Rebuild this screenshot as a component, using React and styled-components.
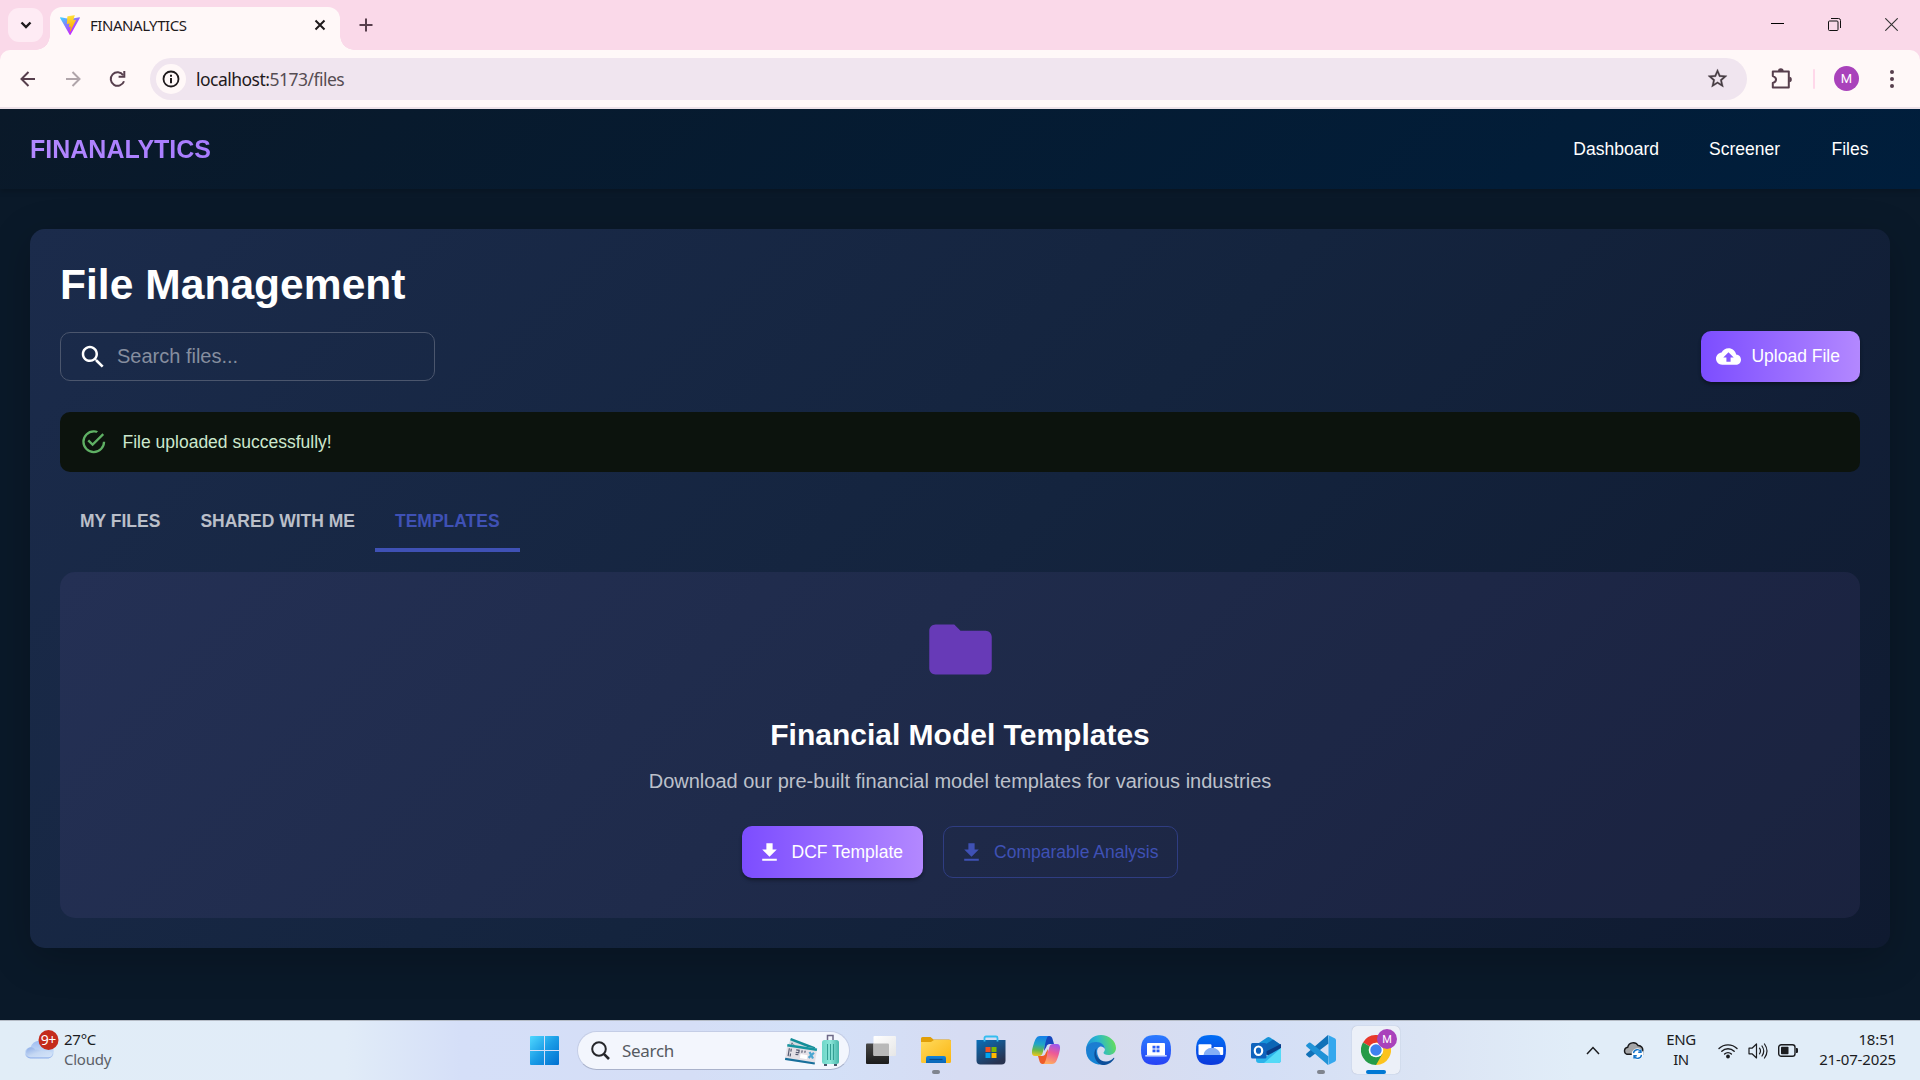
import React from "react";
import styled, { createGlobalStyle } from "styled-components";

const GlobalStyle = createGlobalStyle`
  * { box-sizing: border-box; }
  html, body { margin: 0; padding: 0; }
  body { overflow: hidden; background: #0a1929; }
  svg { display: block; flex: none; }
`;

const SYSTEM = `"Noto Sans", "Open Sans", sans-serif`;
const APP = `"Liberation Sans", Arial, sans-serif`;

const Screen = styled.div`
  width: 1920px;
  height: 1080px;
  display: flex;
  flex-direction: column;
  overflow: hidden;
`;

/* ---------- browser ---------- */

const TabStrip = styled.div`
  height: 50px;
  flex: none;
  display: flex;
  align-items: flex-start;
  background: #fad9e9;
  padding-left: 8px;
`;

const TabSearch = styled.div`
  width: 35px;
  height: 34px;
  margin-top: 8px;
  border-radius: 11px;
  background: #feebf4;
  display: grid;
  place-items: center;
`;

const Tab = styled.div`
  position: relative;
  width: 290px;
  height: 43px;
  margin: 7px 0 0 7px;
  padding: 0 12px 7px 10px;
  border-radius: 12px 12px 0 0;
  background: #fff8f8;
  display: flex;
  align-items: center;
  &::before, &::after {
    content: "";
    position: absolute;
    bottom: 0;
    width: 14px;
    height: 14px;
  }
  &::before {
    left: -14px;
    background: radial-gradient(circle at 0 0, transparent 13.5px, #fff8f8 14px);
  }
  &::after {
    right: -14px;
    background: radial-gradient(circle at 100% 0, transparent 13.5px, #fff8f8 14px);
  }
`;

const TabTitle = styled.div`
  flex: 1;
  margin-left: 10px;
  font: 400 15px/20px ${SYSTEM};
  letter-spacing: -0.45px;
  color: #1f1a1c;
`;

const NewTab = styled.div`
  width: 34px;
  height: 34px;
  margin: 8px 0 0 9px;
  display: grid;
  place-items: center;
`;

const WindowControls = styled.div`
  margin-left: auto;
  display: flex;
`;

const WindowButton = styled.div`
  width: 57px;
  height: 48px;
  display: grid;
  place-items: center;
`;

const ToolbarBack = styled.div`
  height: 59px;
  flex: none;
  background: #fad9e9;
`;

const Toolbar = styled.div`
  height: 59px;
  border-radius: 10px 10px 0 0;
  border-bottom: 2px solid #ece1e8;
  background: #fff8f8;
  display: flex;
  align-items: center;
  padding: 0 6px 0 5px;
`;

const ToolButton = styled.div`
  width: 45px;
  height: 45px;
  display: grid;
  place-items: center;
`;

const Omnibox = styled.div`
  flex: 1;
  height: 42px;
  margin: 0 12px 0 10px;
  border-radius: 21px;
  background: #f0e5ef;
  display: flex;
  align-items: center;
  padding: 0 18px 0 6px;
`;

const SiteInfo = styled.div`
  width: 30px;
  height: 30px;
  border-radius: 50%;
  background: #fff8f8;
  display: grid;
  place-items: center;
`;

const Url = styled.div`
  flex: 1;
  margin-left: 10px;
  font: 400 17.5px/24px ${SYSTEM};
  letter-spacing: -0.52px;
  color: #1f1a1c;
  span { color: #564d53; }
`;

const ToolDivider = styled.div`
  width: 2px;
  height: 20px;
  margin: 0 9px 0 9px;
  border-radius: 1px;
  background: #ffd8ea;
`;

const Avatar = styled.div`
  width: ${(p) => p.$size}px;
  height: ${(p) => p.$size}px;
  border-radius: 50%;
  background: #a942bb;
  color: #fff;
  font: 400 ${(p) => p.$font}px/1 Roboto, sans-serif;
  display: grid;
  place-items: center;
`;

/* ---------- application ---------- */

const Page = styled.div`
  height: 911px;
  flex: none;
  background: #0a1929;
  font-family: ${APP};
  color: #fff;
  overflow: hidden;
`;

const NavBar = styled.header`
  height: 80px;
  padding: 0 30px;
  display: flex;
  align-items: center;
  justify-content: space-between;
  background: linear-gradient(135deg, #0a1929 0%, #001e3c 100%);
  box-shadow: 0 2px 6px rgba(0, 0, 0, 0.2);
`;

const Brand = styled.div`
  font-size: 25px;
  font-weight: 700;
  background: linear-gradient(45deg, #b388ff, #a77bff);
  background-clip: text;
  -webkit-background-clip: text;
  color: transparent;
`;

const NavLinks = styled.nav`
  display: flex;
  gap: 10px;
`;

const NavLink = styled.a`
  min-width: 80px;
  padding: 7px 20px;
  text-align: center;
  font-size: 17.5px;
  line-height: 30px;
`;

const Card = styled.main`
  margin: 40px 30px 0;
  height: 719px;
  padding: 30px;
  border-radius: 15px;
  background: linear-gradient(135deg, #1b2b4b 0%, #14243e 50%, #0f1a30 100%);
  box-shadow: 0 10px 40px rgba(0, 0, 0, 0.22);
  display: flex;
  flex-direction: column;
`;

const Title = styled.h1`
  margin: 0;
  font-size: 42.5px;
  line-height: 51px;
  letter-spacing: 0.05px;
  font-weight: 700;
`;

const Actions = styled.div`
  margin-top: 21px;
  height: 51px;
  display: flex;
  justify-content: space-between;
  align-items: center;
`;

const SearchField = styled.div`
  width: 375px;
  height: 49px;
  padding-left: 17px;
  border: 1px solid #4b566d;
  border-radius: 10px;
  display: flex;
  align-items: center;
  gap: 9px;
  font-size: 20px;
  color: #868e9f;
  svg { color: #fff; }
`;

const Button = styled.button`
  height: ${(p) => p.$height}px;
  padding: 0 ${(p) => (p.$outlined ? 19 : 20)}px 0 ${(p) => (p.$outlined ? 15 : 15)}px;
  border: ${(p) => (p.$outlined ? "1px solid #2f3d82" : "none")};
  border-radius: 10px;
  background: ${(p) => (p.$outlined ? "transparent" : "linear-gradient(to right, #7c4dff 0%, #b388ff 100%)")};
  box-shadow: ${(p) => (p.$outlined ? "none" : "0 3px 4px -1px rgba(0,0,0,.25), 0 2px 3px rgba(0,0,0,.2)")};
  color: ${(p) => (p.$outlined ? "#3f51b5" : "#fff")};
  font-family: ${APP};
  font-size: 17.5px;
  display: flex;
  align-items: center;
  gap: 10px;
  white-space: nowrap;
`;

const Alert = styled.div`
  margin-top: 30px;
  height: 60px;
  flex: none;
  padding-left: 20px;
  border-radius: 10px;
  background: #0c130d;
  color: #cce8cd;
  font-size: 17.5px;
  display: flex;
  align-items: center;
  gap: 15px;
  svg { color: #5fb064; }
`;

const Tabs = styled.div`
  margin-top: 20px;
  height: 60px;
  flex: none;
  display: flex;
`;

const TabItem = styled.div`
  padding: 0 20px;
  font-size: 17.5px;
  font-weight: 700;
  line-height: 58px;
  color: ${(p) => (p.$active ? "#3f51b5" : "#babfc9")};
  border-bottom: 4px solid ${(p) => (p.$active ? "#3f51b5" : "transparent")};
`;

const Panel = styled.section`
  margin-top: 20px;
  height: 346px;
  padding-top: 40px;
  border-radius: 15px;
  background: rgba(179, 136, 255, 0.072);
  display: flex;
  flex-direction: column;
  align-items: center;
`;

const PanelTitle = styled.h2`
  margin: 28px 0 0;
  font-size: 30px;
  line-height: 40px;
  font-weight: 700;
`;

const PanelText = styled.p`
  margin: 11px 0 0;
  font-size: 20px;
  line-height: 30px;
  color: #bcc0ca;
`;

const PanelActions = styled.div`
  margin-top: 30px;
  display: flex;
  gap: 20px;
`;

/* ---------- taskbar ---------- */

const Taskbar = styled.footer`
  height: 60px;
  flex: none;
  border-top: 1px solid #b5bcc6;
  background: linear-gradient(90deg, #e1edf7 0%, #e1ecf8 18%, #d5dff8 24%, #d5def6 36%, #d3e1f8 42%, #d6dcf3 50%, #d8dcef 58%, #d4dff6 66%, #dbe4f4 74%, #e1edf8 82%, #e1edf8 100%);
  font-family: ${SYSTEM};
  color: #1b1c1f;
  display: flex;
  align-items: center;
`;

const Weather = styled.div`
  width: 527px;
  padding: 0 0 4px 23px;
  display: flex;
  align-items: center;
  gap: 4px;
`;

const WeatherText = styled.div`
  font-size: 15px;
  line-height: 20px;
  letter-spacing: -0.25px;
  div + div { color: #5b6067; }
`;

const StartCell = styled.div`
  width: 34px;
  display: grid;
  place-items: center;
`;

const SearchPill = styled.div`
  width: 273px;
  height: 39px;
  margin: 0 3px 1px 16px;
  padding: 0 10px 0 13px;
  border: 1px solid #c4cde6;
  border-bottom-color: #a9b2cb;
  border-radius: 20px;
  background: #f3f6fd;
  display: flex;
  align-items: center;
  gap: 12px;
  font-size: 17px;
  letter-spacing: -0.3px;
  color: #565a61;
  svg:last-child { margin-left: auto; }
`;

const AppCell = styled.div`
  position: relative;
  width: 55px;
  height: 59px;
  padding-bottom: 1px;
  display: grid;
  place-items: center;
`;

const ActiveTile = styled.div`
  width: 48px;
  height: 48px;
  border-radius: 5px;
  background: #ecf0f8;
  box-shadow: 0 0 1px rgba(90, 100, 130, 0.5);
  display: grid;
  place-items: center;
`;

const RunMark = styled.div`
  position: absolute;
  left: 50%;
  bottom: 6px;
  width: ${(p) => (p.$active ? 20 : 8)}px;
  height: 4px;
  transform: translateX(-50%);
  border-radius: 2px;
  background: ${(p) => (p.$active ? "#0078d4" : "#7f848e")};
`;

const ProfileBadge = styled.div`
  position: absolute;
  left: 29px;
  top: 8px;
`;

const Tray = styled.div`
  margin-left: auto;
  padding-right: 24px;
  display: flex;
  align-items: center;
`;

const TrayItem = styled.div`
  width: ${(p) => p.$width}px;
  display: grid;
  place-items: center;
`;

const TrayText = styled.div`
  width: ${(p) => p.$width}px;
  padding-bottom: 4px;
  text-align: ${(p) => p.$align};
  font-size: 15px;
  line-height: 20px;
  letter-spacing: ${(p) => p.$spacing}px;
  white-space: nowrap;
`;

/* ---------- icons ---------- */

const Solid = ({ size, d }) => (
  <svg width={size} height={size} viewBox="0 0 24 24" fill="currentColor"><path d={d} /></svg>
);
const Line = ({ w, h = w, d, stroke = "#573f4d", sw = 2, ...rest }) => (
  <svg width={w} height={h} viewBox={`0 0 ${w} ${h}`} fill="none" stroke={stroke} strokeWidth={sw} {...rest}><path d={d} /></svg>
);

const SEARCH = "M15.5 14h-.79l-.28-.27C15.41 12.59 16 11.11 16 9.5 16 5.91 13.09 3 9.5 3S3 5.91 3 9.5 5.91 16 9.5 16c1.61 0 3.09-.59 4.23-1.57l.27.28v.79l5 4.99L20.49 19l-4.99-5zm-6 0C7.01 14 5 11.99 5 9.5S7.01 5 9.5 5 14 7.01 14 9.5 11.99 14 9.5 14z";
const CLOUD_UP = "M19.35 10.04C18.67 6.59 15.64 4 12 4 9.11 4 6.6 5.64 5.35 8.04 2.34 8.36 0 10.91 0 14c0 3.31 2.69 6 6 6h13c2.76 0 5-2.24 5-5 0-2.64-2.05-4.78-4.65-4.96zM14 13v4h-4v-4H7l5-5 5 5h-3z";
const SUCCESS = "M20,12A8,8 0 0,1 12,20A8,8 0 0,1 4,12A8,8 0 0,1 12,4C12.76,4 13.5,4.11 14.2,4.31L15.77,2.74C14.61,2.26 13.34,2 12,2A10,10 0 0,0 2,12A10,10 0 0,0 12,22A10,10 0 0,0 22,12H20M7.91,10.08L6.5,11.5L11,16L21,6L19.59,4.58L11,13.17L7.91,10.08Z";
const FOLDER = "M10 4H4c-1.1 0-1.99.9-1.99 2L2 18c0 1.1.9 2 2 2h16c1.1 0 2-.9 2-2V8c0-1.1-.9-2-2-2h-8l-2-2z";
const DOWNLOAD = "M5 20h14v-2H5v2zM19 9h-4V3H9v6H5l7 7 7-7z";

const ViteLogo = () => (
  <svg width="20" height="20" viewBox="0 0 256 257">
    <defs>
      <linearGradient id="vA" x1="-.8%" x2="57.6%" y1="7.6%" y2="78.4%"><stop offset="0" stopColor="#41d1ff" /><stop offset="1" stopColor="#bd34fe" /></linearGradient>
      <linearGradient id="vB" x1="43.4%" x2="50.3%" y1="2.2%" y2="89%"><stop offset="0" stopColor="#ffea83" /><stop offset=".083" stopColor="#ffdd35" /><stop offset="1" stopColor="#ffa800" /></linearGradient>
    </defs>
    <path fill="url(#vA)" d="M255.153 37.938L134.897 252.976c-2.483 4.44-8.862 4.466-11.382.048L.875 37.958c-2.746-4.814 1.371-10.646 6.827-9.67l120.385 21.517a6.537 6.537 0 0 0 2.322-.004l117.867-21.483c5.438-.991 9.574 4.796 6.877 9.62Z" />
    <path fill="url(#vB)" d="M185.432.063L96.44 17.501a3.268 3.268 0 0 0-2.634 3.014l-5.474 92.456a3.268 3.268 0 0 0 3.997 3.378l24.777-5.718c2.318-.535 4.413 1.507 3.936 3.838l-7.361 36.047c-.495 2.426 1.782 4.5 4.151 3.78l15.304-4.649c2.372-.72 4.652 1.36 4.15 3.788l-11.698 56.621c-.732 3.542 3.979 5.473 5.943 2.437l1.313-2.028l72.516-144.72c1.215-2.423-.88-5.186-3.54-4.672l-25.505 4.922c-2.396.462-4.435-1.77-3.759-4.114l16.646-57.705c.677-2.35-1.37-4.583-3.769-4.113Z" />
  </svg>
);

const Reload = () => (
  <svg width="18" height="18" viewBox="0 0 18 18" fill="none" stroke="#573f4d" strokeWidth="2">
    <path d="M15 11.200A6.800 6.800 0 1 1 14.200 5.200" /><path d="M15.300 1v5.700h-5.700" />
  </svg>
);

const Puzzle = () => (
  <svg width="21" height="21" viewBox="0 0 21 21">
    <path fill="none" stroke="#573f4d" strokeWidth="2" strokeLinejoin="round" d="M1.800 3.500h16v16h-16v-4.600c4.300-1.200 4.300-5.600 0-6.800Z" />
    <path fill="#573f4d" d="M7 3a2.800 2.700 0 0 1 5.600 0zM18.300 8.800a2.500 2.700 0 0 1 0 5.400z" />
  </svg>
);

const Cloud = () => (
  <svg width="37" height="37" viewBox="0 0 37 37">
    <defs>
      <linearGradient id="cl" x1="0" x2="0" y1="0" y2="1"><stop offset="0" stopColor="#9dbcf2" /><stop offset=".7" stopColor="#c8dcf6" /><stop offset="1" stopColor="#8eaeea" /></linearGradient>
      <linearGradient id="cl2" x1="0" x2="1" y1="0" y2="1"><stop offset="0" stopColor="#8babe6" /><stop offset=".5" stopColor="#c5d8f3" /><stop offset="1" stopColor="#d5e5fa" /></linearGradient>
    </defs>
    <path fill="url(#cl)" d="M7.500 28.500a5.600 5.600 0 0 1 0-11.200A10.200 10.200 0 0 1 25 14.500 7.200 7.200 0 0 1 25.500 28.500z" />
    <path fill="url(#cl2)" d="M7.500 27.300a5 5 0 1 1 4.800-7.600c3.500-1 6.500 2 10 1.500 3-.5 8 1 6.500 4.300-1 1.800-3 1.800-4 1.800z" />
    <circle cx="25.500" cy="10" r="10" fill="#c42b1c" />
    <text x="25.200" y="15" textAnchor="middle" fontSize="14" fontFamily="Noto Sans, sans-serif" fill="#fff" letterSpacing="-.5">9+</text>
  </svg>
);

const StartIcon = () => (
  <svg width="29" height="29" viewBox="0 0 29 29">
    <defs><linearGradient id="st" x1="0" y1="0" x2="29" y2="29" gradientUnits="userSpaceOnUse"><stop offset="0" stopColor="#50d8ff" /><stop offset=".5" stopColor="#1a9ce6" /><stop offset="1" stopColor="#006fd0" /></linearGradient></defs>
    <path fill="url(#st)" d="M1 0h13v14H0V1a1 1 0 0 1 1-1zM15 0h13a1 1 0 0 1 1 1v13H15zM0 15h14v14H1a1 1 0 0 1-1-1zM15 15h14v13a1 1 0 0 1-1 1H15z" />
  </svg>
);

const Travel = () => (
  <svg width="54" height="32" viewBox="0 0 54 32">
    <defs><linearGradient id="tv" x1="0" x2="1"><stop offset="0" stopColor="#6ed6c8" /><stop offset=".5" stopColor="#8be5d8" /><stop offset="1" stopColor="#48b6aa" /></linearGradient></defs>
    <g transform="rotate(21 6 4)">
      <rect x="6" y="4" width="26" height="12" fill="#d5dde3" />
      <rect x="6" y="4" width="26" height="2.500" fill="#138d98" />
      <path stroke="#555a70" strokeWidth="1.200" d="M9 8v5M11 9v4" />
    </g>
    <g transform="rotate(9 3 10)">
      <rect x="2.500" y="10" width="30" height="16" fill="#e4e0e6" />
      <rect x="2.500" y="10" width="30" height="2.500" fill="#1595a0" />
      <rect x="2.500" y="24" width="30" height="2.200" fill="#176f9b" />
      <path stroke="#555a70" fill="none" strokeWidth="1.200" d="M5 14v8M7 14v3m0 2v3M12 14.500h3v2.500h-3M12 19h3M18 14v2.500M21 14v2" />
      <rect x="17" y="18" width="7" height="4" fill="#fff" />
      <path stroke="#4ba6d1" strokeWidth="2.200" d="M25.500 14.500l4.500 6M30 14.500l-4.500 6" />
    </g>
    <path fill="none" stroke="#6e6987" strokeWidth="1.500" d="M42.500 7V1.500h5.500v5.500" />
    <rect x="37" y="6" width="17" height="24" rx="2.500" fill="url(#tv)" />
    <path stroke="#349e94" strokeWidth="1" d="M42.500 10v16M45.500 10v16M48.500 10v16" />
    <path stroke="#46566a" strokeWidth="2" d="M39 31h3M49 31h3" />
  </svg>
);

const TaskView = () => (
  <svg width="30" height="30" viewBox="0 0 30 30">
    <defs><linearGradient id="tk" x2="0" y2="1"><stop stopColor="#474747" /><stop offset="1" stopColor="#1b1b1b" /></linearGradient><linearGradient id="tw" x2="1" y2="1"><stop stopColor="#fff" /><stop offset="1" stopColor="#e6e6e6" /></linearGradient></defs>
    <rect x="0" y="8.500" width="23" height="20.500" rx="1" fill="url(#tk)" />
    <rect x="7.500" y="1" width="22.500" height="20" rx="1" fill="url(#tw)" />
    <path fill="#b9b9b9" d="M7.500 8.500H22a1 1 0 0 1 1 1V21H8.500a1 1 0 0 1-1-1z" />
  </svg>
);

const Explorer = () => (
  <svg width="30" height="30" viewBox="0 0 30 30">
    <defs><linearGradient id="ex" x1="0" y1="0" x2="1" y2="1"><stop stopColor="#ffda5d" /><stop offset="1" stopColor="#fbb510" /></linearGradient><linearGradient id="eb" x2="0" y2="1"><stop stopColor="#1383d9" /><stop offset="1" stopColor="#0b67b7" /></linearGradient></defs>
    <path fill="#e19f08" d="M0 3.500A1.500 1.500 0 0 1 1.500 2h8l3 2.500H28a2 2 0 0 1 2 2V12H0z" />
    <path fill="url(#ex)" d="M0 7h10l3-2h15.500A1.500 1.500 0 0 1 30 6.500v20a1.500 1.500 0 0 1-1.500 1.500h-27A1.500 1.500 0 0 1 0 26.500z" />
    <path fill="url(#eb)" d="M5 28v-5a2 2 0 0 1 2-2h16a2 2 0 0 1 2 2v5z" />
    <path stroke="#084a8a" strokeWidth="1.200" d="M8.500 24.500h13" />
  </svg>
);

const Store = () => (
  <svg width="30" height="30" viewBox="0 0 30 30">
    <defs><linearGradient id="so" x2="0.600" y2="1"><stop stopColor="#0a6fb9" /><stop offset="1" stopColor="#28324f" /></linearGradient></defs>
    <path fill="none" stroke="#35bdf0" strokeWidth="1.800" d="M8.500 7V3a1.500 1.500 0 0 1 1.500-1.500h10A1.500 1.500 0 0 1 21.500 3v4" />
    <path fill="url(#so)" d="M.5 5h29v20.500a4 4 0 0 1-4 4h-21a4 4 0 0 1-4-4z" />
    <path stroke="#35bdf0" strokeWidth="1.800" d="M8.500 5v1.500M21.500 5v1.500" />
    <path fill="#f25022" d="M9.500 12h5v5h-5z" /><path fill="#7fba00" d="M15.500 12h5v5h-5z" />
    <path fill="#00a4ef" d="M9.500 18h5v5h-5z" /><path fill="#ffb900" d="M15.500 18h5v5h-5z" />
  </svg>
);

const Copilot = () => (
  <svg width="30" height="30" viewBox="0 0 30 30">
    <defs>
      <linearGradient id="c1" x1=".3" y1="0" x2=".2" y2="1"><stop stopColor="#1680e8" /><stop offset=".4" stopColor="#20a5c6" /><stop offset=".7" stopColor="#66b84b" /><stop offset="1" stopColor="#f2c61c" /></linearGradient>
      <linearGradient id="c2" x1=".7" y1="0" x2=".4" y2="1"><stop stopColor="#9b57ee" /><stop offset=".45" stopColor="#ee5a95" /><stop offset="1" stopColor="#ffac5f" /></linearGradient>
    </defs>
    <path fill="#1547bd" d="M14 1h4.500c1.600 0 2.400 1 2.900 2.500L23 9h-4c-2 0-3 .7-3.700 3L13 16z" />
    <path fill="#ee5b28" d="M16 29h-4.500c-1.600 0-2.400-1-2.900-2.500L7 21h4c2 0 3-.7 3.700-3L17 14z" />
    <path fill="url(#c1)" d="M18 1H9C5.500 1 4.300 4 2.700 9S-.8 21 4 21h4c2 0 3-1 3.700-3.300l3.100-11.200C15.500 4 16.300 1 18 1z" />
    <path fill="url(#c2)" d="M12 29h9c3.500 0 4.700-3 6.300-8S30.800 9 26 9h-4c-2 0-3 1-3.700 3.300l-3.100 11.200C14.500 26 13.700 29 12 29z" />
  </svg>
);

const Edge = () => (
  <svg width="30" height="30" viewBox="0 0 30 30">
    <defs>
      <linearGradient id="e1" x1="0" y1=".6" x2="1" y2=".4"><stop stopColor="#1c8edb" /><stop offset=".45" stopColor="#2ab7cd" /><stop offset="1" stopColor="#67df55" /></linearGradient>
      <linearGradient id="e2" x2=".3" y2="1"><stop stopColor="#1e7bd0" /><stop offset="1" stopColor="#1485d5" /></linearGradient>
    </defs>
    <path fill="url(#e1)" d="M0 14.500C.5 6 7 0 15 0s15 6 15 13c0 4.500-3.500 7-7.500 7-3.500 0-5-1.300-5-2.300 0-.7 1.400-1.300 1.400-3.700C18.900 11 15.500 8 11 8 5 8 1 11 0 14.500z" />
    <path fill="url(#e2)" d="M0 15C0 10 4.500 7 10 7c5.500 0 9 3.500 9 7-1-1.800-2.500-2.600-4-2.600-4 0-5 6-2.500 10.500 2 4 6 6.600 9 6.400C13 32 0 28 0 15z" />
    <path fill="#0d4f9a" d="M10.500 13c-2.500 8 3 13.500 9.500 13.500 3 0 5.500-1.500 7.500-3.500.5-.5 1 0 .7.700C25.500 28 21 30 17 30 10 29.500 5.500 19 10.500 13z" />
  </svg>
);

const Squircle = ({ id, children, dark }) => (
  <svg width="30" height="30" viewBox="0 0 30 30">
    <defs><linearGradient id={id} x2="0" y2="1"><stop stopColor={dark ? "#006ef5" : "#2a7bff"} /><stop offset="1" stopColor={dark ? "#0b38dc" : "#2842f5"} /></linearGradient></defs>
    <path fill={`url(#${id})`} d="M15 0c11 0 15 4 15 15s-4 15-15 15S0 26 0 15 4 0 15 0z" />
    {children}
  </svg>
);

const Outlook = () => (
  <svg width="30" height="30" viewBox="0 0 30 30">
    <path fill="#1592d8" d="M5 10L16 2.500q1.500-1 3 0L30 10v5H5z" />
    <path fill="#0c65b5" d="M15 9l7-4.500L30 10 14 21z" />
    <path fill="#0a3c88" d="M14 17l16-8v5l-12 8z" />
    <path fill="#2cb3ea" d="M5 22l9 0 16-9v12a3 3 0 0 1-3 3H8a3 3 0 0 1-3-3z" />
    <path fill="#54daf7" d="M30 13v12a3 3 0 0 1-3 3H13z" />
    <rect x="0" y="8" width="15.500" height="15.500" rx="1.500" fill="#0f63bd" />
    <ellipse cx="7.500" cy="15.700" rx="3.700" ry="4.200" fill="none" stroke="#fff" strokeWidth="2.200" />
  </svg>
);

const Code = () => (
  <svg width="30" height="30" viewBox="0 0 30 30">
    <path fill="#1071b8" d="M22.500 8.500L4.500 22.300a1.200 1.200 0 0 1-1.600-.1L.5 20.300a1.200 1.200 0 0 1 0-1.700L22 0z" />
    <path fill="#1f92d7" d="M22.500 21.500L4.500 7.700a1.200 1.200 0 0 0-1.600.1L.5 9.700a1.200 1.200 0 0 0 0 1.700L22 30z" />
    <path fill="#35a8ee" d="M22 0l6.700 3.200a2.300 2.300 0 0 1 1.300 2v19.600a2.300 2.300 0 0 1-1.300 2L22 30c.4-.4.500-1 .5-1.500v-27C22.500 1 22.400.4 22 0z" />
  </svg>
);

const Chrome = () => (
  <svg width="30" height="30" viewBox="0 0 30 30">
    <path fill="#e8392b" d="M15 15L2 7.500a15 15 0 0 1 26 0z" />
    <path fill="#fcc31e" d="M15 15V7.500h13A15 15 0 0 1 15 30z" />
    <path fill="#259b48" d="M15 15l6.500 3.750L15 30A15 15 0 0 1 2 7.500z" />
    <circle cx="15" cy="15" r="7.300" fill="#fff" /><circle cx="15" cy="15" r="5.700" fill="#3f82f0" />
  </svg>
);

const SyncCloud = () => (
  <svg width="21" height="19" viewBox="0 0 21 19">
    <path fill="#a4a5a7" stroke="#18191b" strokeWidth="1.400" d="M4 13.300a3.600 3.600 0 0 1 .7-7A5.600 5.600 0 0 1 15 4.500a4.500 4.500 0 0 1 4.500 6v2.800z" />
    <circle cx="14.500" cy="13" r="5.800" fill="#fff" />
    <path fill="none" stroke="#1473c8" strokeWidth="1.400" d="M10.500 12.200a4 4 0 0 1 7.500-1.400M18 8.500v2.800h-2.800M18.500 13.800a4 4 0 0 1-7.500 1.400M11 17.500v-2.800h2.800" />
  </svg>
);

const Wifi = () => (
  <svg width="20" height="16" viewBox="0 0 20 16" fill="none" stroke="#1b1c1f" strokeWidth="1.400" strokeLinecap="round">
    <path d="M1 5.500a13 13 0 0 1 18 0M3.800 8.300a9 9 0 0 1 12.400 0M6.600 11a5 5 0 0 1 6.800 0" /><circle cx="10" cy="13.500" r="1.200" fill="#1b1c1f" />
  </svg>
);

const Speaker = () => (
  <svg width="20" height="18" viewBox="0 0 20 18" fill="none" stroke="#1b1c1f" strokeWidth="1.200" strokeLinecap="round" strokeLinejoin="round">
    <path d="M1 6.200h3L8.500 2v14L4 11.800H1zM11.500 6.200q2 2.800 0 5.600M14 4q3.500 5 0 10M16.500 2q5 7 0 14" />
  </svg>
);

const Battery = () => (
  <svg width="20" height="13" viewBox="0 0 20 13">
    <rect x=".7" y=".7" width="16.300" height="11.600" rx="2.600" fill="none" stroke="#1b1c1f" strokeWidth="1.400" />
    <rect x="3" y="2.800" width="7.500" height="7.400" rx=".8" fill="#1b1c1f" /><path fill="#1b1c1f" d="M18 4h.7a1.300 1.300 0 0 1 1.300 1.300v2.400A1.300 1.300 0 0 1 18.700 9H18z" />
  </svg>
);

/* ---------- page ---------- */

const taskbarApps = [
  { name: "taskview", icon: <TaskView /> },
  { name: "explorer", icon: <Explorer />, running: true },
  { name: "store", icon: <Store /> },
  { name: "copilot", icon: <Copilot /> },
  { name: "edge", icon: <Edge /> },
  {
    name: "laptop",
    icon: (
      <Squircle id="q1">
        <path fill="#fff" d="M7 8h16a1 1 0 0 1 1 1v11H6V9a1 1 0 0 1 1-1z" />
        <path fill="#c6d4ff" d="M4.300 20h21.400v1.600H4.300z" />
        <path fill="#2b5df8" d="M11.500 10.800h3v2.700h-3zM15.500 10.800h3v2.700h-3zM11.500 14.500h3v2.700h-3zM15.500 14.500h3v2.700h-3z" />
      </Squircle>
    ),
  },
  {
    name: "screens",
    icon: (
      <Squircle id="q2" dark>
        <rect x="2.500" y="9.300" width="13" height="10.700" rx="1" fill="#fff" />
        <rect x="17.500" y="12" width="9.700" height="8" rx="1" fill="#fff" />
        <path fill="#83aef6" d="M7.500 20a8.500 7.200 0 0 1 17 0z" />
        <path stroke="#0755e8" strokeWidth="1.300" d="M16.500 9v4" />
      </Squircle>
    ),
  },
  { name: "outlook", icon: <Outlook /> },
  { name: "code", icon: <Code />, running: true },
];

function BrowserFrame() {
  return (
    <>
      <TabStrip>
        <TabSearch><Line w={12} h={8} sw={2.4} stroke="#1f1a1c" d="M1.500 1.500L6 6l4.500-4.500" /></TabSearch>
        <Tab>
          <ViteLogo />
          <TabTitle>FINANALYTICS</TabTitle>
          <Line w={16} sw={2} stroke="#1f1a1c" d="M3.500 3.500l9 9M12.500 3.500l-9 9" />
        </Tab>
        <NewTab><Line w={14} sw={2} d="M7 .5v13M.5 7h13" /></NewTab>
        <WindowControls>
          <WindowButton><Line w={13} h={5} sw={1} stroke="#000" d="M0 1.500h13" /></WindowButton>
          <WindowButton><Line w={13} sw={1} stroke="#111" d="M.5 4a1 1 0 0 1 1-1H9a1 1 0 0 1 1 1v7.500a1 1 0 0 1-1 1H1.500a1 1 0 0 1-1-1zM3 .5h7.500a2 2 0 0 1 2 2V10" /></WindowButton>
          <WindowButton><Line w={13} sw={1.1} stroke="#333" d="M.3.3l12.400 12.400M12.700.3L.3 12.700" /></WindowButton>
        </WindowControls>
      </TabStrip>
      <ToolbarBack>
        <Toolbar>
          <ToolButton><Line w={16} d="M15 8H2M8.500 1L1.500 8l7 7" /></ToolButton>
          <ToolButton><Line w={16} stroke="#b0a5aa" d="M1 8h13M7.500 1l7 7-7 7" /></ToolButton>
          <ToolButton><Reload /></ToolButton>
          <Omnibox>
            <SiteInfo>
              <svg width="18" height="18" viewBox="0 0 18 18"><circle cx="9" cy="9" r="7.500" fill="none" stroke="#1f1a1c" strokeWidth="1.800" /><path fill="#1f1a1c" d="M8 4.800h2v2H8zM8 8h2v5.200H8z" /></svg>
            </SiteInfo>
            <Url>localhost:<span>5173/files</span></Url>
            <svg width="23" height="23" viewBox="0 0 24 24" fill="#463c42" stroke="#463c42" strokeWidth=".3"><path d="M22 9.240l-7.190-.62L12 2 9.190 8.630 2 9.240l5.460 4.730L5.820 21 12 17.270 18.180 21l-1.630-7.030L22 9.240zM12 15.400l-3.760 2.270 1-4.280-3.320-2.880 4.380-.38L12 6.100l1.710 4.040 4.380.38-3.320 2.880 1 4.280L12 15.400z" /></svg>
          </Omnibox>
          <ToolButton><Puzzle /></ToolButton>
          <ToolDivider />
          <ToolButton><Avatar $size={25} $font={13}>M</Avatar></ToolButton>
          <ToolButton><svg width="4" height="18" viewBox="0 0 4 18" fill="#573f4d"><circle cx="2" cy="2" r="2" /><circle cx="2" cy="9" r="2" /><circle cx="2" cy="16" r="2" /></svg></ToolButton>
        </Toolbar>
      </ToolbarBack>
    </>
  );
}

function FilesPage() {
  return (
    <Page>
      <NavBar>
        <Brand>FINANALYTICS</Brand>
        <NavLinks>
          <NavLink>Dashboard</NavLink>
          <NavLink>Screener</NavLink>
          <NavLink>Files</NavLink>
        </NavLinks>
      </NavBar>
      <Card>
        <Title>File Management</Title>
        <Actions>
          <SearchField><Solid size={30} d={SEARCH} />Search files...</SearchField>
          <Button $height={51}><Solid size={25} d={CLOUD_UP} />Upload File</Button>
        </Actions>
        <Alert><Solid size={27.5} d={SUCCESS} />File uploaded successfully!</Alert>
        <Tabs>
          <TabItem>MY FILES</TabItem>
          <TabItem>SHARED WITH ME</TabItem>
          <TabItem $active>TEMPLATES</TabItem>
        </Tabs>
        <Panel>
          <svg width="75" height="75" viewBox="0 0 24 24" fill="#673ab7"><path d={FOLDER} /></svg>
          <PanelTitle>Financial Model Templates</PanelTitle>
          <PanelText>Download our pre-built financial model templates for various industries</PanelText>
          <PanelActions>
            <Button $height={52}><Solid size={25} d={DOWNLOAD} />DCF Template</Button>
            <Button $height={52} $outlined><Solid size={25} d={DOWNLOAD} />Comparable Analysis</Button>
          </PanelActions>
        </Panel>
      </Card>
    </Page>
  );
}

function SystemTaskbar() {
  return (
    <Taskbar>
      <Weather>
        <Cloud />
        <WeatherText><div>27°C</div><div>Cloudy</div></WeatherText>
      </Weather>
      <StartCell><StartIcon /></StartCell>
      <SearchPill>
        <svg width="19" height="19" viewBox="0 0 19 19" fill="none" stroke="#25262a" strokeWidth="2"><circle cx="8" cy="8" r="6.800" /><path strokeWidth="2.600" d="M12.800 12.800l5.200 5.200" /></svg>
        Search
        <Travel />
      </SearchPill>
      {taskbarApps.map((a) => (
        <AppCell key={a.name}>{a.icon}{a.running && <RunMark />}</AppCell>
      ))}
      <AppCell>
        <ActiveTile><Chrome /></ActiveTile>
        <ProfileBadge><Avatar $size={20} $font={11}>M</Avatar></ProfileBadge>
        <RunMark $active />
      </AppCell>
      <Tray>
        <TrayItem $width={48}><Line w={14} h={9} sw={1.5} stroke="#1b1c1f" d="M1 8l6-6.500L13 8" /></TrayItem>
        <TrayItem $width={32}><SyncCloud /></TrayItem>
        <TrayText $width={64} $align="center" $spacing={-0.4}>ENG<br />IN</TrayText>
        <TrayItem $width={30}><Wifi /></TrayItem>
        <TrayItem $width={30}><Speaker /></TrayItem>
        <TrayItem $width={30}><Battery /></TrayItem>
        <TrayText $width={93} $align="right" $spacing={-0.15}>18:51<br />21-07-2025</TrayText>
      </Tray>
    </Taskbar>
  );
}

export default function App() {
  return (
    <Screen>
      <GlobalStyle />
      <BrowserFrame />
      <FilesPage />
      <SystemTaskbar />
    </Screen>
  );
}
